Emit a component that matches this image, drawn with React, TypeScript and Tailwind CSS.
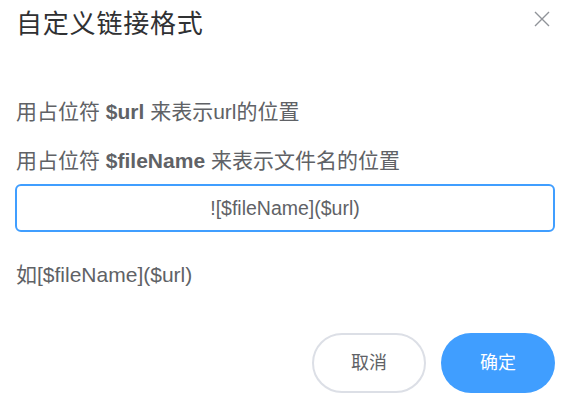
import { useState } from "react";

export default function App() {
  const [format, setFormat] = useState("![$fileName]($url)");

  return (
    <div
      className="w-[571px] h-[404px] bg-white overflow-hidden"
      style={{ fontFamily: '"Liberation Sans", "Noto Sans CJK SC", sans-serif' }}
    >
      {/* header */}
      <div className="flex items-center justify-between pl-4 pr-[20px] pt-[6px]">
        <h2 className="text-[26px] leading-[36px] text-[#303133] tracking-[0.8px]">自定义链接格式</h2>
        <button className="w-[18px] h-[18px] -mt-[10px] flex items-center justify-center text-[#909399]">
          <svg width="16" height="16" viewBox="0 0 16 16" fill="none" stroke="currentColor" strokeWidth="1.4">
            <path d="M1 1L15 15M15 1L1 15" />
          </svg>
        </button>
      </div>

      {/* body */}
      <div className="px-4 pt-[56px] text-[21px] leading-[27px] text-[#606266]">
        <p>
          用占位符 <b className="font-bold">$url</b> 来表示url的位置
        </p>
        <p className="mt-[22px]">
          用占位符 <b className="font-bold">$fileName</b> 来表示文件名的位置
        </p>
        <input
          value={format}
          onChange={(e) => setFormat(e.target.value)}
          className="mt-[10px] w-[540px] -ml-[1px] h-[48px] border-2 border-[#409eff] rounded-[6px] text-center text-[19.5px] text-[#606266] outline-none"
        />
        <p className="mt-[29px]">如[$fileName]($url)</p>
      </div>

      {/* footer */}
      <div className="flex justify-end gap-[15px] pr-4 mt-[45px]">
        <button className="w-[114px] h-[60px] rounded-full border-2 border-[#dcdfe6] bg-white text-[18px] text-[#606266]">
          取消
        </button>
        <button className="w-[114px] h-[60px] rounded-full bg-[#409eff] text-[18px] text-white">
          确定
        </button>
      </div>
    </div>
  );
}
